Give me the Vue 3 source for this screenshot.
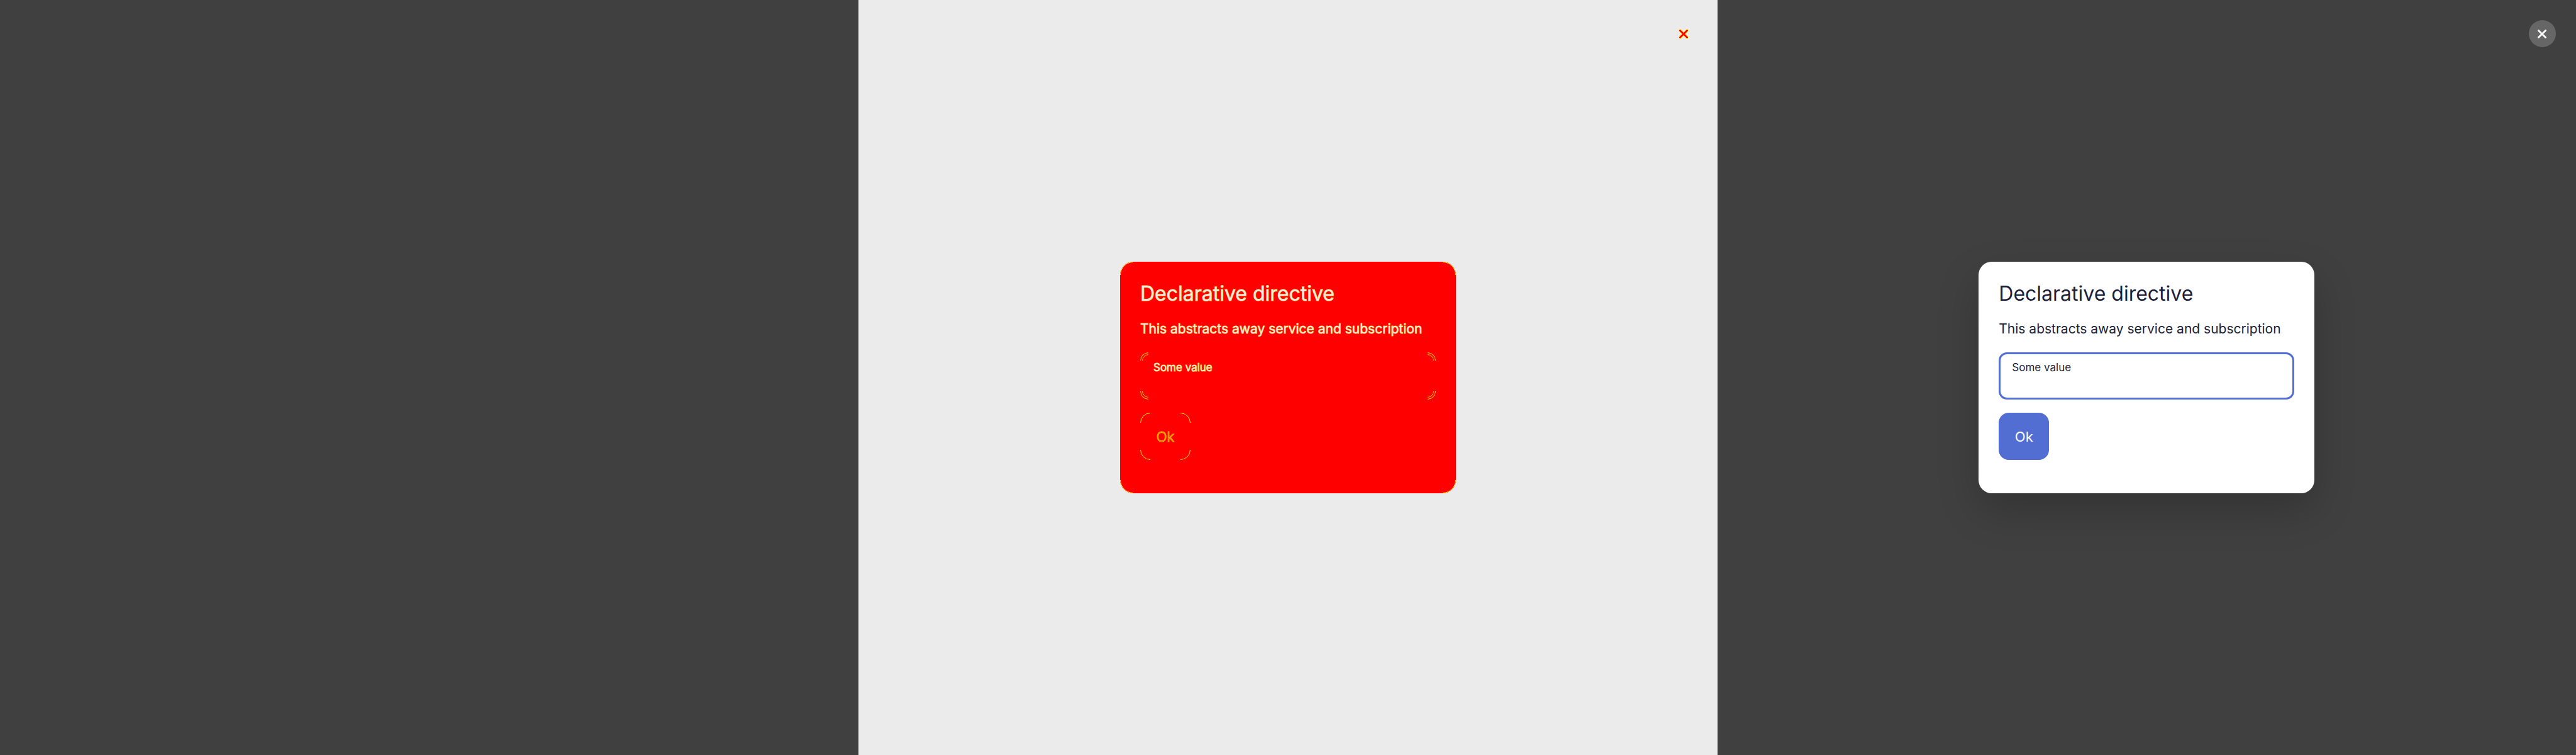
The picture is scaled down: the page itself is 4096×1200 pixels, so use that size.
<script setup>
const panels = [
  { kind: 'blank' },
  { kind: 'diff' },
  { kind: 'actual' },
]
</script>

<template>
  <main class="compare">
    <section v-for="panel in panels" :key="panel.kind" class="panel" :class="panel.kind">
      <template v-if="panel.kind !== 'blank'">
        <button class="close" type="button" aria-label="Close">
          <svg viewBox="0 0 20 20" aria-hidden="true">
            <path v-if="panel.kind === 'diff'" class="edge" d="M2.5 2.5 L17.5 17.5 M17.5 2.5 L2.5 17.5" />
            <path class="cross" d="M2 2 L18 18 M18 2 L2 18" />
          </svg>
        </button>
        <form class="card" @submit.prevent>
          <h1>Declarative directive</h1>
          <p>This abstracts away service and subscription</p>
          <div class="field">
            <label :for="panel.kind + '-value'">Some value</label>
            <input :id="panel.kind + '-value'" type="text" />
          </div>
          <button class="ok" type="submit">Ok</button>
        </form>
      </template>
    </section>
  </main>
</template>

<style>
body {
  background: #404040;
}
</style>

<style scoped>
.compare {
  --outline: rgba(255, 255, 0, 0.75);
  display: flex;
  min-height: 100vh;
  font-family: Inter, "Liberation Sans", sans-serif;
}
.panel {
  flex: 1;
  position: relative;
  display: flex;
  align-items: center;
  justify-content: center;
  background: #404040;
  color: #1b1f3b;
}
.diff {
  background: #ebebeb;
  color: #ebebeb;
}
.close {
  position: absolute;
  top: 32px;
  right: 32px;
  display: flex;
  align-items: center;
  justify-content: center;
  width: 43px;
  height: 43px;
  padding: 0;
  border: 0;
  border-radius: 50%;
  background: #666;
}
.diff .close {
  background: transparent;
}
.close svg {
  width: 14px;
  height: 14px;
  overflow: visible;
}
.close path {
  fill: none;
  stroke-linecap: round;
}
.cross {
  stroke: #fff;
  stroke-width: 4;
}
.diff .edge {
  stroke: #ff0;
  stroke-width: 6;
  stroke-linecap: square;
}
.diff .cross {
  stroke: #f00;
}
.card {
  position: relative;
  box-sizing: border-box;
  display: flex;
  flex-direction: column;
  align-items: flex-start;
  width: 534px;
  padding: 32px 32px 53px;
  border-radius: 21px;
  background: #fff;
  box-shadow: 0 27px 67px rgba(0, 0, 0, 0.2);
}
h1,
p {
  margin: 0;
  font-weight: 400;
  white-space: nowrap;
}
h1 {
  font-size: 32px;
  line-height: 38px;
}
p {
  margin-top: 21px;
  font-size: 21px;
  line-height: 32px;
}
.field {
  position: relative;
  width: 100%;
  margin-top: 21px;
}
label {
  position: absolute;
  top: 14px;
  left: 21px;
  font-size: 17px;
  line-height: 20px;
}
input {
  display: block;
  box-sizing: border-box;
  width: 100%;
  height: 75px;
  padding: 32px 20px 8px;
  border: 3px solid #526ed3;
  border-radius: 13px;
  outline: 0;
  background: transparent;
  color: inherit;
  font: inherit;
  font-size: 21px;
}
.ok {
  position: relative;
  width: 80px;
  height: 75px;
  margin-top: 21px;
  padding: 0;
  border: 0;
  border-radius: 16px;
  background: #526ed3;
  color: #fff;
  font: inherit;
  font-size: 22px;
}
.diff .card,
.diff .ok {
  background: #f00;
  box-shadow: none;
}
.diff input {
  border-color: transparent;
}
.diff h1,
.diff p,
.diff label {
  -webkit-text-stroke: 1px var(--outline);
  paint-order: stroke fill;
}
.diff .ok {
  color: #f00;
  font-weight: 300;
  -webkit-text-stroke: 1px var(--outline);
}
/* Outlines that only show where the corners curve */
.diff .card::before,
.diff .field::before,
.diff .field::after,
.diff .ok::before {
  --corner: 13px;
  content: "";
  position: absolute;
  inset: 0;
  border: 1px solid #ff0;
  border-radius: var(--corner);
  pointer-events: none;
  mask:
    linear-gradient(#000, #000) 0 0,
    linear-gradient(#000, #000) 100% 0,
    linear-gradient(#000, #000) 0 100%,
    linear-gradient(#000, #000) 100% 100%;
  mask-size: var(--corner) var(--corner);
  mask-repeat: no-repeat;
}
.diff .card::before {
  --corner: 21px;
}
.diff .field::after {
  --corner: 10px;
  inset: 3px;
}
.diff .ok::before {
  --corner: 16px;
}
</style>
